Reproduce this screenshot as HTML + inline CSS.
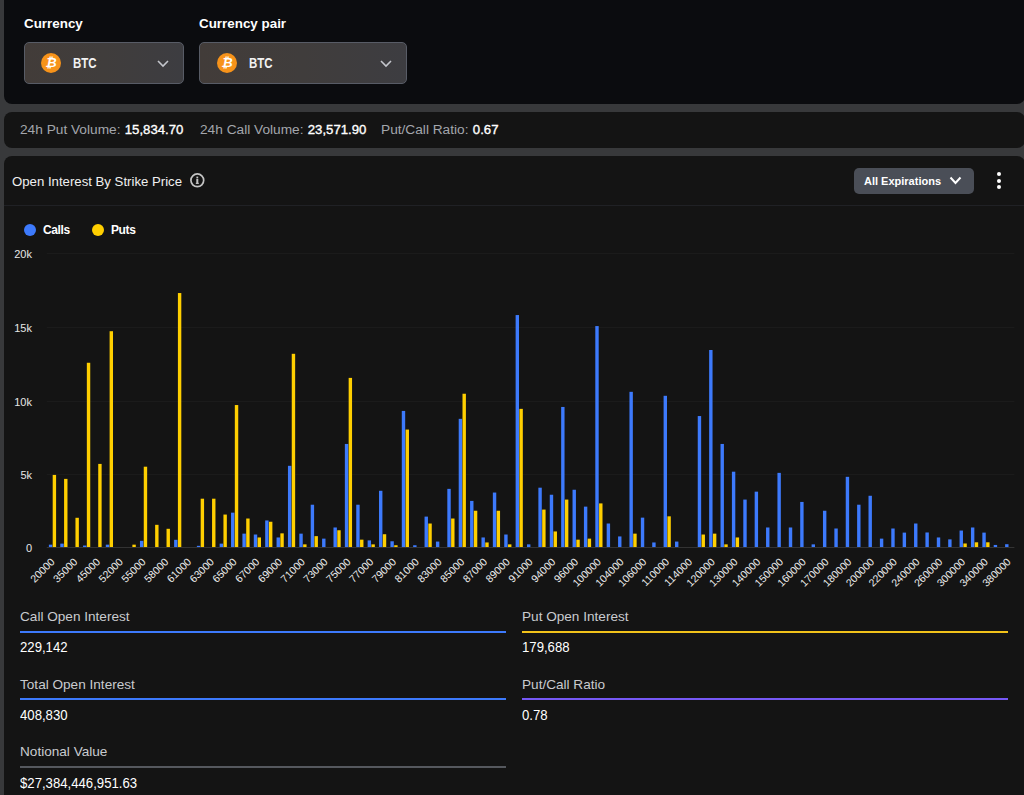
<!DOCTYPE html>
<html><head><meta charset="utf-8">
<style>
html,body{margin:0;padding:0;}
body{width:1024px;height:795px;overflow:hidden;background:#38393b;position:relative;font-family:"Liberation Sans",sans-serif;color:#fff;}
.abs{position:absolute;white-space:nowrap;}
.card{position:absolute;left:4px;width:1021px;}
#c1{top:-20px;height:124px;background:#0b0c0f;border-radius:8px;}
#c2{top:112px;height:36px;background:#141414;border-radius:8px;}
#c3{top:156px;height:700px;background:#141414;border-radius:8px;}
.lbl{font-weight:700;font-size:13.4px;color:#fff;}
.dd{position:absolute;top:42px;height:40px;border:1px solid #585c66;border-radius:5px;background:linear-gradient(90deg,#423c39 0%,#403d3c 50%,#3d3d41 100%);}
.coin{position:absolute;width:20px;height:20px;border-radius:50%;background:#f7931a;top:10px;}
.coin span{position:absolute;left:0;top:0;width:20px;line-height:20px;text-align:center;font-size:13px;font-weight:700;color:#fff;font-style:italic;}
.btc{position:absolute;top:12px;font-size:14px;font-weight:700;color:#f2f2f2;transform:scaleX(0.82);transform-origin:0 0;}
.stat{font-size:13.7px;color:#a3a6ac;}
.stat b{color:#fff;font-weight:400;font-size:13.2px;margin-left:0.5px;-webkit-text-stroke:0.35px #fff;}
.slbl{font-size:13.6px;color:#c9cbcf;}
.sval{font-size:14px;color:#fff;transform:scaleX(0.94);transform-origin:0 0;}
.bar{position:absolute;height:2px;}
</style></head>
<body>
<div class="card" id="c1"></div>
<div class="card" id="c2"></div>
<div class="card" id="c3"></div>

<div class="abs lbl" style="left:24px;top:16px;">Currency</div>
<div class="abs lbl" style="left:199px;top:16px;">Currency pair</div>

<div class="dd" style="left:24px;width:157.5px;">
  <div class="coin" style="left:16px;"><span>&#8383;</span></div>
  <div class="btc" style="left:48px;">BTC</div>
  <svg class="abs" style="left:131.5px;top:17px" width="12" height="8"><path d="M1 1 L6 6 L11 1" fill="none" stroke="#c4c6cc" stroke-width="1.6"/></svg>
</div>
<div class="dd" style="left:199px;width:206px;">
  <div class="coin" style="left:17px;"><span>&#8383;</span></div>
  <div class="btc" style="left:49px;">BTC</div>
  <svg class="abs" style="left:180px;top:17px" width="12" height="8"><path d="M1 1 L6 6 L11 1" fill="none" stroke="#c4c6cc" stroke-width="1.6"/></svg>
</div>

<div class="abs stat" style="left:20px;top:122px;">24h Put Volume: <b>15,834.70</b></div>
<div class="abs stat" style="left:200px;top:122px;">24h Call Volume: <b>23,571.90</b></div>
<div class="abs stat" style="left:381px;top:122px;">Put/Call Ratio: <b>0.67</b></div>

<div class="abs" style="left:12px;top:174px;font-size:13.2px;color:#f0f0f0;">Open Interest By Strike Price</div>
<svg class="abs" style="left:190px;top:173px" width="15" height="15"><circle cx="7.3" cy="7.3" r="6.4" fill="none" stroke="#c4c4c4" stroke-width="1.7"/><rect x="6.3" y="6" width="2" height="4.8" fill="#c4c4c4"/><rect x="6.4" y="3.6" width="1.8" height="1.8" fill="#c4c4c4"/><rect x="5.8" y="9.8" width="3" height="1.1" fill="#c4c4c4"/></svg>

<div class="abs" style="left:854px;top:168px;width:120px;height:26px;background:#4a4e57;border-radius:5px;"></div>
<div class="abs" style="left:864px;top:175px;font-size:11px;font-weight:700;color:#fff;">All Expirations</div>
<svg class="abs" style="left:949px;top:176px" width="14" height="10"><path d="M1.5 1.5 L6.5 7 L11.5 1.5" fill="none" stroke="#fff" stroke-width="2"/></svg>
<div class="abs" style="left:997px;top:172px;width:4px;height:4px;border-radius:50%;background:#fff;"></div>
<div class="abs" style="left:997px;top:178.5px;width:4px;height:4px;border-radius:50%;background:#fff;"></div>
<div class="abs" style="left:997px;top:185px;width:4px;height:4px;border-radius:50%;background:#fff;"></div>

<div class="abs" style="left:4px;top:205px;width:1021px;height:1px;background:#202125;"></div>

<div class="abs" style="left:24px;top:223.5px;width:12px;height:12px;border-radius:50%;background:#3d7afc;"></div>
<div class="abs" style="left:43px;top:223px;font-size:12px;letter-spacing:-0.4px;font-weight:700;color:#fff;">Calls</div>
<div class="abs" style="left:91.5px;top:223.5px;width:12px;height:12px;border-radius:50%;background:#ffcf00;"></div>
<div class="abs" style="left:111px;top:223px;font-size:12px;letter-spacing:-0.4px;font-weight:700;color:#fff;">Puts</div>

<svg width="1024" height="620" style="position:absolute;left:0;top:0">
<line x1="46.8" x2="1014.4" y1="474.5" y2="474.5" stroke="#1b1b1b" stroke-width="1"/><line x1="46.8" x2="1014.4" y1="401.5" y2="401.5" stroke="#1b1b1b" stroke-width="1"/><line x1="46.8" x2="1014.4" y1="327.5" y2="327.5" stroke="#1b1b1b" stroke-width="1"/><line x1="46.8" x2="1014.4" y1="253.5" y2="253.5" stroke="#1b1b1b" stroke-width="1"/>
<line x1="46.8" x2="1014.4" y1="547.5" y2="547.5" stroke="#333" stroke-width="1"/>
<g><rect x="48.89" y="544.65" width="3.4" height="2.35" fill="#3d7afc"/><rect x="52.69" y="474.92" width="3.4" height="72.08" fill="#ffcf00"/><rect x="60.28" y="543.62" width="3.4" height="3.38" fill="#3d7afc"/><rect x="64.08" y="478.88" width="3.4" height="68.12" fill="#ffcf00"/><rect x="75.46" y="517.79" width="3.4" height="29.21" fill="#ffcf00"/><rect x="83.04" y="545.53" width="3.4" height="1.47" fill="#3d7afc"/><rect x="86.84" y="362.77" width="3.4" height="184.23" fill="#ffcf00"/><rect x="98.23" y="463.91" width="3.4" height="83.09" fill="#ffcf00"/><rect x="105.81" y="544.65" width="3.4" height="2.35" fill="#3d7afc"/><rect x="109.61" y="331.20" width="3.4" height="215.80" fill="#ffcf00"/><rect x="132.38" y="544.65" width="3.4" height="2.35" fill="#ffcf00"/><rect x="139.96" y="540.83" width="3.4" height="6.17" fill="#3d7afc"/><rect x="143.76" y="466.70" width="3.4" height="80.30" fill="#ffcf00"/><rect x="155.14" y="524.83" width="3.4" height="22.17" fill="#ffcf00"/><rect x="166.53" y="528.80" width="3.4" height="18.20" fill="#ffcf00"/><rect x="174.11" y="539.81" width="3.4" height="7.19" fill="#3d7afc"/><rect x="177.91" y="293.04" width="3.4" height="253.96" fill="#ffcf00"/><rect x="196.88" y="545.83" width="3.4" height="1.17" fill="#3d7afc"/><rect x="200.68" y="498.70" width="3.4" height="48.30" fill="#ffcf00"/><rect x="212.06" y="498.70" width="3.4" height="48.30" fill="#ffcf00"/><rect x="219.64" y="543.62" width="3.4" height="3.38" fill="#3d7afc"/><rect x="223.44" y="514.56" width="3.4" height="32.44" fill="#ffcf00"/><rect x="231.03" y="512.65" width="3.4" height="34.35" fill="#3d7afc"/><rect x="234.83" y="405.04" width="3.4" height="141.96" fill="#ffcf00"/><rect x="242.41" y="533.64" width="3.4" height="13.36" fill="#3d7afc"/><rect x="246.21" y="518.52" width="3.4" height="28.48" fill="#ffcf00"/><rect x="253.80" y="534.52" width="3.4" height="12.48" fill="#3d7afc"/><rect x="257.60" y="537.46" width="3.4" height="9.54" fill="#ffcf00"/><rect x="265.18" y="520.43" width="3.4" height="26.57" fill="#3d7afc"/><rect x="268.98" y="521.75" width="3.4" height="25.25" fill="#ffcf00"/><rect x="276.56" y="537.46" width="3.4" height="9.54" fill="#3d7afc"/><rect x="280.36" y="533.35" width="3.4" height="13.65" fill="#ffcf00"/><rect x="287.95" y="465.82" width="3.4" height="81.18" fill="#3d7afc"/><rect x="291.75" y="353.81" width="3.4" height="193.19" fill="#ffcf00"/><rect x="299.33" y="533.64" width="3.4" height="13.36" fill="#3d7afc"/><rect x="303.13" y="544.36" width="3.4" height="2.64" fill="#ffcf00"/><rect x="310.71" y="504.72" width="3.4" height="42.28" fill="#3d7afc"/><rect x="314.51" y="536.14" width="3.4" height="10.86" fill="#ffcf00"/><rect x="322.10" y="538.63" width="3.4" height="8.37" fill="#3d7afc"/><rect x="333.48" y="527.48" width="3.4" height="19.52" fill="#3d7afc"/><rect x="337.28" y="530.26" width="3.4" height="16.74" fill="#ffcf00"/><rect x="344.86" y="443.95" width="3.4" height="103.05" fill="#3d7afc"/><rect x="348.66" y="377.89" width="3.4" height="169.11" fill="#ffcf00"/><rect x="356.25" y="504.72" width="3.4" height="42.28" fill="#3d7afc"/><rect x="360.05" y="539.66" width="3.4" height="7.34" fill="#ffcf00"/><rect x="367.63" y="540.39" width="3.4" height="6.61" fill="#3d7afc"/><rect x="371.43" y="544.36" width="3.4" height="2.64" fill="#ffcf00"/><rect x="379.01" y="490.78" width="3.4" height="56.22" fill="#3d7afc"/><rect x="382.81" y="534.23" width="3.4" height="12.77" fill="#ffcf00"/><rect x="390.40" y="541.27" width="3.4" height="5.73" fill="#3d7afc"/><rect x="394.20" y="545.24" width="3.4" height="1.76" fill="#ffcf00"/><rect x="401.78" y="410.92" width="3.4" height="136.08" fill="#3d7afc"/><rect x="405.58" y="429.56" width="3.4" height="117.44" fill="#ffcf00"/><rect x="413.16" y="545.24" width="3.4" height="1.76" fill="#3d7afc"/><rect x="424.55" y="516.61" width="3.4" height="30.39" fill="#3d7afc"/><rect x="428.35" y="523.51" width="3.4" height="23.49" fill="#ffcf00"/><rect x="435.93" y="541.57" width="3.4" height="5.43" fill="#3d7afc"/><rect x="447.32" y="488.87" width="3.4" height="58.13" fill="#3d7afc"/><rect x="451.12" y="518.52" width="3.4" height="28.48" fill="#ffcf00"/><rect x="458.70" y="418.84" width="3.4" height="128.16" fill="#3d7afc"/><rect x="462.50" y="393.74" width="3.4" height="153.26" fill="#ffcf00"/><rect x="470.08" y="500.90" width="3.4" height="46.10" fill="#3d7afc"/><rect x="473.88" y="510.74" width="3.4" height="36.26" fill="#ffcf00"/><rect x="481.47" y="537.46" width="3.4" height="9.54" fill="#3d7afc"/><rect x="485.27" y="542.45" width="3.4" height="4.55" fill="#ffcf00"/><rect x="492.85" y="492.54" width="3.4" height="54.46" fill="#3d7afc"/><rect x="496.65" y="510.74" width="3.4" height="36.26" fill="#ffcf00"/><rect x="504.23" y="534.52" width="3.4" height="12.48" fill="#3d7afc"/><rect x="508.03" y="544.36" width="3.4" height="2.64" fill="#ffcf00"/><rect x="515.62" y="315.06" width="3.4" height="231.94" fill="#3d7afc"/><rect x="519.42" y="408.86" width="3.4" height="138.14" fill="#ffcf00"/><rect x="527.00" y="544.36" width="3.4" height="2.64" fill="#3d7afc"/><rect x="538.38" y="487.69" width="3.4" height="59.31" fill="#3d7afc"/><rect x="542.18" y="509.57" width="3.4" height="37.43" fill="#ffcf00"/><rect x="549.77" y="494.74" width="3.4" height="52.26" fill="#3d7afc"/><rect x="553.57" y="531.44" width="3.4" height="15.56" fill="#ffcf00"/><rect x="561.15" y="406.95" width="3.4" height="140.05" fill="#3d7afc"/><rect x="564.95" y="499.58" width="3.4" height="47.42" fill="#ffcf00"/><rect x="572.53" y="489.75" width="3.4" height="57.25" fill="#3d7afc"/><rect x="576.33" y="539.66" width="3.4" height="7.34" fill="#ffcf00"/><rect x="583.92" y="506.63" width="3.4" height="40.37" fill="#3d7afc"/><rect x="587.72" y="538.63" width="3.4" height="8.37" fill="#ffcf00"/><rect x="595.30" y="326.07" width="3.4" height="220.93" fill="#3d7afc"/><rect x="599.10" y="503.40" width="3.4" height="43.60" fill="#ffcf00"/><rect x="606.68" y="523.51" width="3.4" height="23.49" fill="#3d7afc"/><rect x="618.07" y="536.43" width="3.4" height="10.57" fill="#3d7afc"/><rect x="629.45" y="391.83" width="3.4" height="155.17" fill="#3d7afc"/><rect x="633.25" y="533.64" width="3.4" height="13.36" fill="#ffcf00"/><rect x="640.84" y="517.64" width="3.4" height="29.36" fill="#3d7afc"/><rect x="652.22" y="542.45" width="3.4" height="4.55" fill="#3d7afc"/><rect x="663.60" y="395.80" width="3.4" height="151.20" fill="#3d7afc"/><rect x="667.40" y="516.32" width="3.4" height="30.68" fill="#ffcf00"/><rect x="674.99" y="541.57" width="3.4" height="5.43" fill="#3d7afc"/><rect x="697.75" y="416.05" width="3.4" height="130.95" fill="#3d7afc"/><rect x="701.55" y="534.52" width="3.4" height="12.48" fill="#ffcf00"/><rect x="709.14" y="349.99" width="3.4" height="197.01" fill="#3d7afc"/><rect x="712.94" y="533.64" width="3.4" height="13.36" fill="#ffcf00"/><rect x="720.52" y="443.95" width="3.4" height="103.05" fill="#3d7afc"/><rect x="724.32" y="544.36" width="3.4" height="2.64" fill="#ffcf00"/><rect x="731.90" y="471.69" width="3.4" height="75.31" fill="#3d7afc"/><rect x="735.70" y="537.46" width="3.4" height="9.54" fill="#ffcf00"/><rect x="743.29" y="499.58" width="3.4" height="47.42" fill="#3d7afc"/><rect x="754.67" y="491.66" width="3.4" height="55.34" fill="#3d7afc"/><rect x="766.05" y="527.48" width="3.4" height="19.52" fill="#3d7afc"/><rect x="777.44" y="472.87" width="3.4" height="74.13" fill="#3d7afc"/><rect x="788.82" y="527.48" width="3.4" height="19.52" fill="#3d7afc"/><rect x="800.20" y="501.93" width="3.4" height="45.07" fill="#3d7afc"/><rect x="811.59" y="544.36" width="3.4" height="2.64" fill="#3d7afc"/><rect x="822.97" y="510.74" width="3.4" height="36.26" fill="#3d7afc"/><rect x="834.36" y="528.50" width="3.4" height="18.50" fill="#3d7afc"/><rect x="845.74" y="476.83" width="3.4" height="70.17" fill="#3d7afc"/><rect x="857.12" y="504.72" width="3.4" height="42.28" fill="#3d7afc"/><rect x="868.51" y="495.77" width="3.4" height="51.23" fill="#3d7afc"/><rect x="879.89" y="538.63" width="3.4" height="8.37" fill="#3d7afc"/><rect x="891.27" y="528.50" width="3.4" height="18.50" fill="#3d7afc"/><rect x="902.66" y="532.61" width="3.4" height="14.39" fill="#3d7afc"/><rect x="914.04" y="523.51" width="3.4" height="23.49" fill="#3d7afc"/><rect x="925.42" y="532.47" width="3.4" height="14.53" fill="#3d7afc"/><rect x="936.81" y="537.46" width="3.4" height="9.54" fill="#3d7afc"/><rect x="948.19" y="539.37" width="3.4" height="7.63" fill="#3d7afc"/><rect x="959.57" y="530.56" width="3.4" height="16.44" fill="#3d7afc"/><rect x="963.37" y="543.48" width="3.4" height="3.52" fill="#ffcf00"/><rect x="970.96" y="527.48" width="3.4" height="19.52" fill="#3d7afc"/><rect x="974.76" y="542.30" width="3.4" height="4.70" fill="#ffcf00"/><rect x="982.34" y="532.61" width="3.4" height="14.39" fill="#3d7afc"/><rect x="986.14" y="542.30" width="3.4" height="4.70" fill="#ffcf00"/><rect x="993.72" y="544.94" width="3.4" height="2.06" fill="#3d7afc"/><rect x="1005.11" y="544.21" width="3.4" height="2.79" fill="#3d7afc"/></g>
<g font-family="Liberation Sans" font-size="11" fill="#e6e6e6"><text x="32" y="552.0" text-anchor="end">0</text><text x="32" y="479.0" text-anchor="end">5k</text><text x="32" y="406.0" text-anchor="end">10k</text><text x="32" y="332.0" text-anchor="end">15k</text><text x="32" y="258.0" text-anchor="end">20k</text></g>
<g font-family="Liberation Sans" font-size="10.5" fill="#ececec"><text transform="translate(55.29,562.5) rotate(-45)" text-anchor="end">20000</text><text transform="translate(78.06,562.5) rotate(-45)" text-anchor="end">35000</text><text transform="translate(100.83,562.5) rotate(-45)" text-anchor="end">45000</text><text transform="translate(123.59,562.5) rotate(-45)" text-anchor="end">52000</text><text transform="translate(146.36,562.5) rotate(-45)" text-anchor="end">55000</text><text transform="translate(169.13,562.5) rotate(-45)" text-anchor="end">58000</text><text transform="translate(191.89,562.5) rotate(-45)" text-anchor="end">61000</text><text transform="translate(214.66,562.5) rotate(-45)" text-anchor="end">63000</text><text transform="translate(237.43,562.5) rotate(-45)" text-anchor="end">65000</text><text transform="translate(260.20,562.5) rotate(-45)" text-anchor="end">67000</text><text transform="translate(282.96,562.5) rotate(-45)" text-anchor="end">69000</text><text transform="translate(305.73,562.5) rotate(-45)" text-anchor="end">71000</text><text transform="translate(328.50,562.5) rotate(-45)" text-anchor="end">73000</text><text transform="translate(351.26,562.5) rotate(-45)" text-anchor="end">75000</text><text transform="translate(374.03,562.5) rotate(-45)" text-anchor="end">77000</text><text transform="translate(396.80,562.5) rotate(-45)" text-anchor="end">79000</text><text transform="translate(419.56,562.5) rotate(-45)" text-anchor="end">81000</text><text transform="translate(442.33,562.5) rotate(-45)" text-anchor="end">83000</text><text transform="translate(465.10,562.5) rotate(-45)" text-anchor="end">85000</text><text transform="translate(487.87,562.5) rotate(-45)" text-anchor="end">87000</text><text transform="translate(510.63,562.5) rotate(-45)" text-anchor="end">89000</text><text transform="translate(533.40,562.5) rotate(-45)" text-anchor="end">91000</text><text transform="translate(556.17,562.5) rotate(-45)" text-anchor="end">94000</text><text transform="translate(578.93,562.5) rotate(-45)" text-anchor="end">96000</text><text transform="translate(601.70,562.5) rotate(-45)" text-anchor="end">100000</text><text transform="translate(624.47,562.5) rotate(-45)" text-anchor="end">104000</text><text transform="translate(647.24,562.5) rotate(-45)" text-anchor="end">106000</text><text transform="translate(670.00,562.5) rotate(-45)" text-anchor="end">110000</text><text transform="translate(692.77,562.5) rotate(-45)" text-anchor="end">114000</text><text transform="translate(715.54,562.5) rotate(-45)" text-anchor="end">120000</text><text transform="translate(738.30,562.5) rotate(-45)" text-anchor="end">130000</text><text transform="translate(761.07,562.5) rotate(-45)" text-anchor="end">140000</text><text transform="translate(783.84,562.5) rotate(-45)" text-anchor="end">150000</text><text transform="translate(806.60,562.5) rotate(-45)" text-anchor="end">160000</text><text transform="translate(829.37,562.5) rotate(-45)" text-anchor="end">170000</text><text transform="translate(852.14,562.5) rotate(-45)" text-anchor="end">180000</text><text transform="translate(874.91,562.5) rotate(-45)" text-anchor="end">200000</text><text transform="translate(897.67,562.5) rotate(-45)" text-anchor="end">220000</text><text transform="translate(920.44,562.5) rotate(-45)" text-anchor="end">240000</text><text transform="translate(943.21,562.5) rotate(-45)" text-anchor="end">260000</text><text transform="translate(965.97,562.5) rotate(-45)" text-anchor="end">300000</text><text transform="translate(988.74,562.5) rotate(-45)" text-anchor="end">340000</text><text transform="translate(1011.51,562.5) rotate(-45)" text-anchor="end">380000</text></g>
</svg>

<div class="abs slbl" style="left:20px;top:609px;">Call Open Interest</div>
<div class="bar" style="left:20px;top:630.6px;width:486px;background:#3d7afc;"></div>
<div class="abs sval" style="left:20px;top:639px;">229,142</div>

<div class="abs slbl" style="left:522px;top:609px;">Put Open Interest</div>
<div class="bar" style="left:522px;top:630.6px;width:486px;background:#f2c21a;"></div>
<div class="abs sval" style="left:522px;top:639px;">179,688</div>

<div class="abs slbl" style="left:20px;top:677px;">Total Open Interest</div>
<div class="bar" style="left:20px;top:698px;width:486px;background:#3d7afc;"></div>
<div class="abs sval" style="left:20px;top:707px;">408,830</div>

<div class="abs slbl" style="left:522px;top:677px;">Put/Call Ratio</div>
<div class="bar" style="left:522px;top:698px;width:486px;background:#7658f5;"></div>
<div class="abs sval" style="left:522px;top:707px;">0.78</div>

<div class="abs slbl" style="left:20px;top:744px;">Notional Value</div>
<div class="bar" style="left:20px;top:765.5px;width:486px;background:#55585e;"></div>
<div class="abs sval" style="left:20px;top:775px;">$27,384,446,951.63</div>

</body></html>
